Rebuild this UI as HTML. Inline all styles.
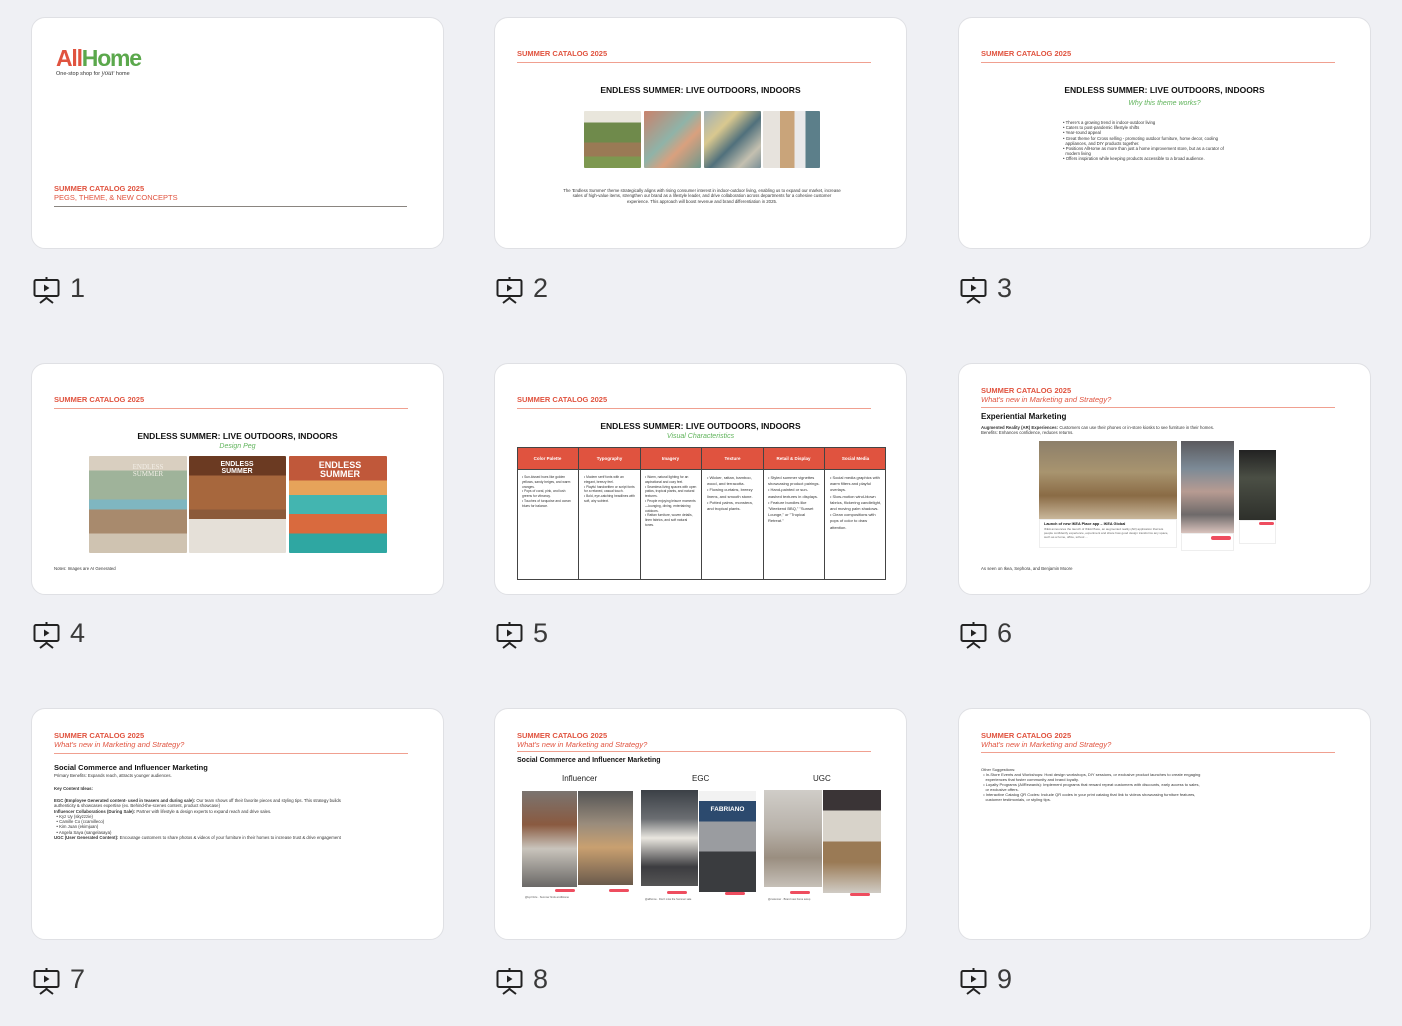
<!DOCTYPE html>
<html><head><meta charset="utf-8"><style>
*{margin:0;padding:0;box-sizing:border-box}
body{width:1402px;height:1026px;background:#eff0f4;position:relative;overflow:hidden;font-family:"Liberation Sans",sans-serif}
.card{position:absolute;width:413px;height:232px;background:#fff;border:1px solid #dfe0e4;border-radius:14px;overflow:hidden}
.card *{position:absolute}
.lbl{position:absolute;height:30px}
.lbl svg{position:absolute;left:0;top:0}
.lbl span{position:absolute;left:37px;top:-3px;font-size:27px;color:#3a3a3a;line-height:30px}
.hd{left:22px;font-size:7.5px;font-weight:bold;color:#e0533f;white-space:nowrap}
.sub{left:22px;font-size:7.5px;color:#e0533f;font-style:italic;white-space:nowrap}
.ln{height:1.2px;background:#f0a090;left:22px;width:354px}
.ttl{font-size:8.5px;font-weight:bold;color:#111;white-space:nowrap;width:100%;text-align:center;left:0}
.grn{font-size:7px;font-style:italic;color:#5fb35a;width:100%;text-align:center;left:0}
.tx{font-size:4.3px;color:#333;line-height:5.4px}
.img{border-radius:1px}
</style></head><body>

<!-- Slide 1 -->
<div class="card" style="left:31px;top:17px">
  <div style="left:24px;top:28px;font-size:23px;font-weight:bold;letter-spacing:-1.2px;line-height:24px"><span style="position:static;color:#e0533f">All</span><span style="position:static;color:#5ba84c">Home</span></div>
  <div style="left:24px;top:51px;font-size:5.5px;color:#333;white-space:nowrap">One-stop shop for <i style="position:static;font-family:'Liberation Serif',serif;font-size:7px">your</i> home</div>
  <div class="hd" style="top:166px">SUMMER CATALOG 2025</div>
  <div style="left:22px;top:175px;font-size:7.5px;color:#e0533f;white-space:nowrap">PEGS, THEME, &amp; NEW CONCEPTS</div>
  <div style="left:22px;top:188px;width:353px;height:1px;background:#8a8580"></div>
</div>
<div class="lbl" style="left:33px;top:276px"><svg width="28" height="28" viewBox="0 0 28 28" fill="none" stroke="#222" stroke-width="2"><rect x="1.5" y="4" width="24" height="16" rx="1.5"/><path d="M13.5 1v3M13.5 20v2M7 27l6.5-5 6.5 5"/><path d="M11 8.5v7l5.5-3.5z" fill="#222" stroke="none"/></svg><span>1</span></div>

<!-- Slide 2 -->
<div class="card" style="left:494px;top:17px">
  <div class="hd" style="top:31px">SUMMER CATALOG 2025</div>
  <div class="ln" style="top:44px"></div>
  <div class="ttl" style="top:67px">ENDLESS SUMMER: LIVE OUTDOORS, INDOORS</div>
  <div class="img" style="left:89px;top:93px;width:57px;height:57px;background:linear-gradient(180deg,#e9e6dc 0 20%,#6f8a4b 20% 55%,#9a7a55 55% 80%,#7d9850 80%)"></div>
  <div class="img" style="left:149px;top:93px;width:57px;height:57px;background:linear-gradient(135deg,#c9826c,#8fb3a8 45%,#d9a07e 65%,#6f988c)"></div>
  <div class="img" style="left:209px;top:93px;width:57px;height:57px;background:linear-gradient(135deg,#9fb0b8,#d9c88f 30%,#50707c 55%,#c4c0b0 80%,#7a8f96)"></div>
  <div class="img" style="left:268px;top:93px;width:57px;height:57px;background:linear-gradient(90deg,#e7e3dd 0 30%,#c9a47a 30% 55%,#e9e9ea 55% 75%,#5c7f8a 75%)"></div>
  <div class="tx" style="left:68px;top:170px;width:278px;text-align:center">The 'Endless Summer' theme strategically aligns with rising consumer interest in indoor-outdoor living, enabling us to expand our market, increase sales of high-value items, strengthen our brand as a lifestyle leader, and drive collaboration across departments for a cohesive customer experience. This approach will boost revenue and brand differentiation in 2025.</div>
</div>
<div class="lbl" style="left:496px;top:276px"><svg width="28" height="28" viewBox="0 0 28 28" fill="none" stroke="#222" stroke-width="2"><rect x="1.5" y="4" width="24" height="16" rx="1.5"/><path d="M13.5 1v3M13.5 20v2M7 27l6.5-5 6.5 5"/><path d="M11 8.5v7l5.5-3.5z" fill="#222" stroke="none"/></svg><span>2</span></div>

<!-- Slide 3 -->
<div class="card" style="left:958px;top:17px">
  <div class="hd" style="top:31px">SUMMER CATALOG 2025</div>
  <div class="ln" style="top:44px"></div>
  <div class="ttl" style="top:67px">ENDLESS SUMMER: LIVE OUTDOORS, INDOORS</div>
  <div class="grn" style="top:82px">Why this theme works?</div>
  <div class="tx" style="left:104px;top:102px;width:215px;line-height:5.2px">• There's a growing trend in indoor-outdoor living<br>• Caters to post-pandemic lifestyle shifts<br>• Year-round appeal<br>• Great theme for Cross selling - promoting outdoor furniture, home decor, cooling<br>&nbsp;&nbsp;appliances, and DIY products together.<br>• Positions AllHome as more than just a home improvement store, but as a curator of<br>&nbsp;&nbsp;modern living<br>• Offers inspiration while keeping products accessible to a broad audience.</div>
</div>
<div class="lbl" style="left:960px;top:276px"><svg width="28" height="28" viewBox="0 0 28 28" fill="none" stroke="#222" stroke-width="2"><rect x="1.5" y="4" width="24" height="16" rx="1.5"/><path d="M13.5 1v3M13.5 20v2M7 27l6.5-5 6.5 5"/><path d="M11 8.5v7l5.5-3.5z" fill="#222" stroke="none"/></svg><span>3</span></div>

<!-- Slide 4 -->
<div class="card" style="left:31px;top:363px">
  <div class="hd" style="top:31px">SUMMER CATALOG 2025</div>
  <div class="ln" style="top:44px"></div>
  <div class="ttl" style="top:67px">ENDLESS SUMMER: LIVE OUTDOORS, INDOORS</div>
  <div class="grn" style="top:79px">Design Peg</div>
  <div class="img" style="left:57px;top:92px;width:98px;height:97px;background:linear-gradient(180deg,#d9cfc0 0 15%,#9fb39a 15% 45%,#7fb6c0 45% 55%,#a88a6d 55% 80%,#cfc3b1 80%)"></div>
  <div class="img" style="left:157px;top:92px;width:97px;height:97px;background:linear-gradient(180deg,#6b3a22 0 20%,#a7673d 20% 55%,#8b5a3a 55% 65%,#e5e0d8 65% 100%)"></div>
  <div class="img" style="left:257px;top:92px;width:98px;height:97px;background:linear-gradient(180deg,#c0583a 0 25%,#e6a35a 25% 40%,#43b5b0 40% 60%,#d96a3e 60% 80%,#2fa7a2 80%)"></div>
  <div style="left:89px;top:100px;width:54px;font-size:7px;color:#f2eee6;font-family:'Liberation Serif',serif;text-align:center;line-height:7px">ENDLESS SUMMER</div>
  <div style="left:185px;top:97px;width:40px;font-size:7px;color:#fff;font-weight:bold;text-align:center;line-height:7px">ENDLESS SUMMER</div>
  <div style="left:283px;top:97px;width:50px;font-size:9px;color:#fff;font-weight:bold;text-align:center;line-height:9px">ENDLESS SUMMER</div>
  <div class="tx" style="left:22px;top:202px;white-space:nowrap">Notes: Images are AI Generated</div>
</div>
<div class="lbl" style="left:33px;top:621px"><svg width="28" height="28" viewBox="0 0 28 28" fill="none" stroke="#222" stroke-width="2"><rect x="1.5" y="4" width="24" height="16" rx="1.5"/><path d="M13.5 1v3M13.5 20v2M7 27l6.5-5 6.5 5"/><path d="M11 8.5v7l5.5-3.5z" fill="#222" stroke="none"/></svg><span>4</span></div>

<!-- Slide 5 -->
<div class="card" style="left:494px;top:363px">
  <div class="hd" style="top:31px">SUMMER CATALOG 2025</div>
  <div class="ln" style="top:44px"></div>
  <div class="ttl" style="top:57px">ENDLESS SUMMER: LIVE OUTDOORS, INDOORS</div>
  <div class="grn" style="top:69px">Visual Characteristics</div>
  <div style="left:22px;top:83px;width:369px;height:133px;border:1px solid #444;background:#fff"></div>
  <div style="left:22px;top:83px;width:369px;height:23px;background:#e0533f;border:1px solid #444"></div>
  <div style="left:83px;top:83px;width:1px;height:133px;background:#444"></div>
  <div style="left:145px;top:83px;width:1px;height:133px;background:#444"></div>
  <div style="left:206px;top:83px;width:1px;height:133px;background:#444"></div>
  <div style="left:268px;top:83px;width:1px;height:133px;background:#444"></div>
  <div style="left:329px;top:83px;width:1px;height:133px;background:#444"></div>
  <div style="left:22px;top:92px;width:61px;text-align:center;font-size:4.5px;font-weight:bold;color:#fff">Color Palette</div>
  <div style="left:84px;top:92px;width:61px;text-align:center;font-size:4.5px;font-weight:bold;color:#fff">Typography</div>
  <div style="left:145px;top:92px;width:61px;text-align:center;font-size:4.5px;font-weight:bold;color:#fff">Imagery</div>
  <div style="left:207px;top:92px;width:61px;text-align:center;font-size:4.5px;font-weight:bold;color:#fff">Texture</div>
  <div style="left:268px;top:92px;width:61px;text-align:center;font-size:4.5px;font-weight:bold;color:#fff">Retail &amp; Display</div>
  <div style="left:330px;top:92px;width:61px;text-align:center;font-size:4.5px;font-weight:bold;color:#fff">Social Media</div>
  <div class="tx" style="left:27px;top:111px;width:52px;font-size:3.3px;line-height:4.8px">• Sun-kissed hues like golden yellows, sandy beiges, and warm oranges.<br>• Pops of coral, pink, and lush greens for vibrancy.<br>• Touches of turquoise and ocean blues for balance.</div>
  <div class="tx" style="left:89px;top:111px;width:52px;font-size:3.3px;line-height:4.8px">• Modern serif fonts with an elegant, breezy feel.<br>• Playful handwritten or script fonts for a relaxed, casual touch.<br>• Bold, eye-catching headlines with soft, airy subtext.</div>
  <div class="tx" style="left:150px;top:111px;width:52px;font-size:3.3px;line-height:4.8px">• Warm, natural lighting for an aspirational and cozy feel.<br>• Seamless living spaces with open patios, tropical plants, and natural textures.<br>• People enjoying leisure moments—lounging, dining, entertaining outdoors.<br>• Rattan furniture, woven details, linen fabrics, and soft natural tones.</div>
  <div class="tx" style="left:212px;top:111px;width:52px;font-size:4px;line-height:6.2px">• Wicker, rattan, bamboo, wood, and terracotta.<br>• Flowing curtains, breezy linens, and smooth stone.<br>• Potted palms, monstera, and tropical plants.</div>
  <div class="tx" style="left:273px;top:111px;width:52px;font-size:4px;line-height:6.2px">• Styled summer vignettes showcasing product pairings.<br>• Hand-painted or sun-washed textures in displays.<br>• Feature bundles like "Weekend BBQ," "Sunset Lounge," or "Tropical Retreat."</div>
  <div class="tx" style="left:335px;top:111px;width:52px;font-size:4px;line-height:6.2px">• Social media graphics with warm filters and playful overlays.<br>• Slow-motion wind-blown fabrics, flickering candlelight, and moving palm shadows.<br>• Clean compositions with pops of color to draw attention.</div>
</div>
<div class="lbl" style="left:496px;top:621px"><svg width="28" height="28" viewBox="0 0 28 28" fill="none" stroke="#222" stroke-width="2"><rect x="1.5" y="4" width="24" height="16" rx="1.5"/><path d="M13.5 1v3M13.5 20v2M7 27l6.5-5 6.5 5"/><path d="M11 8.5v7l5.5-3.5z" fill="#222" stroke="none"/></svg><span>5</span></div>

<!-- Slide 6 -->
<div class="card" style="left:958px;top:363px">
  <div class="hd" style="top:22px">SUMMER CATALOG 2025</div>
  <div class="sub" style="top:31px">What's new in Marketing and Strategy?</div>
  <div class="ln" style="top:43px"></div>
  <div style="left:22px;top:48px;font-size:8px;font-weight:bold;color:#111;white-space:nowrap">Experiential Marketing</div>
  <div class="tx" style="left:22px;top:61px;white-space:nowrap;font-size:4.3px"><b style="position:static">Augmented Reality (AR) Experiences:</b> Customers can use their phones or in-store kiosks to see furniture in their homes.<br>Benefits: Enhances confidence, reduces returns.</div>
  <div style="left:80px;top:77px;width:138px;height:78px;background:linear-gradient(180deg,#8d7f6a,#a8946f 40%,#8a6b45 70%,#c9b79b)"></div>
  <div style="left:80px;top:155px;width:138px;height:29px;border:1px solid #eee;background:#fff"></div>
  <div style="left:85px;top:158px;font-size:3.8px;font-weight:bold;color:#111;white-space:nowrap">Launch of new IKEA Place app – IKEA Global</div>
  <div class="tx" style="left:85px;top:164px;width:128px;font-size:3px;line-height:3.8px;color:#666">IKEA announces the launch of IKEA Place, an augmented reality (AR) application that lets people confidently experience, experiment and share how good design transforms any space, such as a home, office, school ...</div>
  <div style="left:222px;top:77px;width:53px;height:92px;background:linear-gradient(180deg,#5b5a5e,#7c8a96 30%,#b79b92 55%,#6e6a6a 80%,#d9c2bc)"></div>
  <div style="left:222px;top:169px;width:53px;height:18px;background:#fff;border:1px solid #eee"></div>
  <div style="left:252px;top:172px;width:20px;height:4px;background:#ee4d5f;border-radius:2px"></div>
  <div style="left:280px;top:86px;width:37px;height:70px;background:linear-gradient(180deg,#222,#4b4f45 40%,#2e302b)"></div>
  <div style="left:280px;top:156px;width:37px;height:24px;background:#fff;border:1px solid #eee"></div>
  <div style="left:300px;top:158px;width:15px;height:3px;background:#ee4d5f;border-radius:2px"></div>
  <div class="tx" style="left:22px;top:202px;white-space:nowrap">As seen on Ikea, Sephora, and Benjamin Moore</div>
</div>
<div class="lbl" style="left:960px;top:621px"><svg width="28" height="28" viewBox="0 0 28 28" fill="none" stroke="#222" stroke-width="2"><rect x="1.5" y="4" width="24" height="16" rx="1.5"/><path d="M13.5 1v3M13.5 20v2M7 27l6.5-5 6.5 5"/><path d="M11 8.5v7l5.5-3.5z" fill="#222" stroke="none"/></svg><span>6</span></div>

<!-- Slide 7 -->
<div class="card" style="left:31px;top:708px">
  <div class="hd" style="top:22px">SUMMER CATALOG 2025</div>
  <div class="sub" style="top:31px">What's new in Marketing and Strategy?</div>
  <div class="ln" style="top:44px"></div>
  <div style="left:22px;top:54px;font-size:7.5px;font-weight:bold;color:#111;white-space:nowrap">Social Commerce and Influencer Marketing</div>
  <div class="tx" style="left:22px;top:64px;white-space:nowrap">Primary Benefits: Expands reach, attracts younger audiences.</div>
  <div class="tx" style="left:22px;top:77px;white-space:nowrap"><b style="position:static">Key Content Ideas:</b></div>
  <div class="tx" style="left:22px;top:89px;width:300px;line-height:5.3px"><b style="position:static">EGC (Employee Generated content- used in teasers and during sale):</b> Our team shows off their favorite pieces and styling tips. This strategy builds authenticity &amp; showcases expertise (ex. Behind-the-scenes content, product showcase)<br><b style="position:static">Influencer Collaborations (During Sale):</b> Partner with lifestyle &amp; design experts to expand reach and drive sales.<br>&nbsp;&nbsp;• Kyz Uy (skyzzzie)<br>&nbsp;&nbsp;• Camille Co (ccamilleco)<br>&nbsp;&nbsp;• Kim Juan (ekimjuan)<br>&nbsp;&nbsp;• Angela Saya (sangelasaya)<br><b style="position:static">UGC (User Generated Content):</b> Encourage customers to share photos &amp; videos of your furniture in their homes to increase trust &amp; drive engagement</div>
</div>
<div class="lbl" style="left:33px;top:967px"><svg width="28" height="28" viewBox="0 0 28 28" fill="none" stroke="#222" stroke-width="2"><rect x="1.5" y="4" width="24" height="16" rx="1.5"/><path d="M13.5 1v3M13.5 20v2M7 27l6.5-5 6.5 5"/><path d="M11 8.5v7l5.5-3.5z" fill="#222" stroke="none"/></svg><span>7</span></div>

<!-- Slide 8 -->
<div class="card" style="left:494px;top:708px">
  <div class="hd" style="top:22px">SUMMER CATALOG 2025</div>
  <div class="sub" style="top:31px">What's new in Marketing and Strategy?</div>
  <div class="ln" style="top:42px"></div>
  <div style="left:22px;top:48px;font-size:7px;font-weight:bold;color:#111;white-space:nowrap">Social Commerce and Influencer Marketing</div>
  <div style="left:67px;top:65px;font-size:8px;color:#222">Influencer</div>
  <div style="left:197px;top:65px;font-size:8px;color:#222">EGC</div>
  <div style="left:318px;top:65px;font-size:8px;color:#222">UGC</div>
  <div style="left:27px;top:82px;width:55px;height:96px;background:linear-gradient(180deg,#7a7470,#8a5a40 35%,#c9c4bc 60%,#6a6866)"></div>
  <div style="left:83px;top:82px;width:55px;height:94px;background:linear-gradient(180deg,#555,#9a8c7c 35%,#c9a070 60%,#6a5a4c)"></div>
  <div style="left:146px;top:81px;width:57px;height:96px;background:linear-gradient(180deg,#3b4046,#6b6e72 30%,#e9e6df 50%,#3c3c40 80%,#555)"></div>
  <div style="left:204px;top:82px;width:57px;height:101px;background:linear-gradient(180deg,#f2f2f2 0 10%,#2c4a6e 10% 30%,#9a9ca0 30% 60%,#3a3c3f 60%)"></div>
  <div style="left:207px;top:97px;width:51px;font-size:6.5px;font-weight:bold;color:#fff;text-align:center">FABRIANO</div>
  <div style="left:269px;top:81px;width:58px;height:97px;background:linear-gradient(180deg,#d0cdc8,#b8b2aa 40%,#9a8e80 70%,#c6c0b8)"></div>
  <div style="left:328px;top:81px;width:58px;height:103px;background:linear-gradient(180deg,#3a3436 0 20%,#d8d3ca 20% 50%,#9a7a55 50% 70%,#d0ccc5)"></div>
  <div style="left:27px;top:178px;width:111px;height:34px;background:#fff"></div>
  <div style="left:60px;top:180px;width:20px;height:3px;background:#ee4d5f;border-radius:2px"></div>
  <div style="left:114px;top:180px;width:20px;height:3px;background:#ee4d5f;border-radius:2px"></div>
  <div style="left:172px;top:182px;width:20px;height:3px;background:#ee4d5f;border-radius:2px"></div>
  <div style="left:230px;top:183px;width:20px;height:3px;background:#ee4d5f;border-radius:2px"></div>
  <div style="left:295px;top:182px;width:20px;height:3px;background:#ee4d5f;border-radius:2px"></div>
  <div style="left:355px;top:184px;width:20px;height:3px;background:#ee4d5f;border-radius:2px"></div>
  <div class="tx" style="left:30px;top:187px;width:50px;font-size:2.6px;line-height:3.4px;color:#555">@kyzzzzie · Summer finds at AllHome</div>
  <div class="tx" style="left:150px;top:189px;width:50px;font-size:2.6px;line-height:3.4px;color:#555">@allhome · Don't miss the Summer sale</div>
  <div class="tx" style="left:273px;top:189px;width:50px;font-size:2.6px;line-height:3.4px;color:#555">@customer · Brand new home setup</div>
</div>
<div class="lbl" style="left:496px;top:967px"><svg width="28" height="28" viewBox="0 0 28 28" fill="none" stroke="#222" stroke-width="2"><rect x="1.5" y="4" width="24" height="16" rx="1.5"/><path d="M13.5 1v3M13.5 20v2M7 27l6.5-5 6.5 5"/><path d="M11 8.5v7l5.5-3.5z" fill="#222" stroke="none"/></svg><span>8</span></div>

<!-- Slide 9 -->
<div class="card" style="left:958px;top:708px">
  <div class="hd" style="top:22px">SUMMER CATALOG 2025</div>
  <div class="sub" style="top:31px">What's new in Marketing and Strategy?</div>
  <div class="ln" style="top:43px"></div>
  <div class="tx" style="left:22px;top:58px;width:310px;font-size:4px;line-height:5px">Other Suggestions:<br>&nbsp;&nbsp;• In-Store Events and Workshops: Host design workshops, DIY sessions, or exclusive product launches to create engaging<br>&nbsp;&nbsp;&nbsp;&nbsp;experiences that foster community and brand loyalty.<br>&nbsp;&nbsp;• Loyalty Programs (AllRewards): Implement programs that reward repeat customers with discounts, early access to sales,<br>&nbsp;&nbsp;&nbsp;&nbsp;or exclusive offers.<br>&nbsp;&nbsp;• Interactive Catalog QR Codes: Include QR codes in your print catalog that link to videos showcasing furniture features,<br>&nbsp;&nbsp;&nbsp;&nbsp;customer testimonials, or styling tips.</div>
</div>
<div class="lbl" style="left:960px;top:967px"><svg width="28" height="28" viewBox="0 0 28 28" fill="none" stroke="#222" stroke-width="2"><rect x="1.5" y="4" width="24" height="16" rx="1.5"/><path d="M13.5 1v3M13.5 20v2M7 27l6.5-5 6.5 5"/><path d="M11 8.5v7l5.5-3.5z" fill="#222" stroke="none"/></svg><span>9</span></div>

</body></html>
